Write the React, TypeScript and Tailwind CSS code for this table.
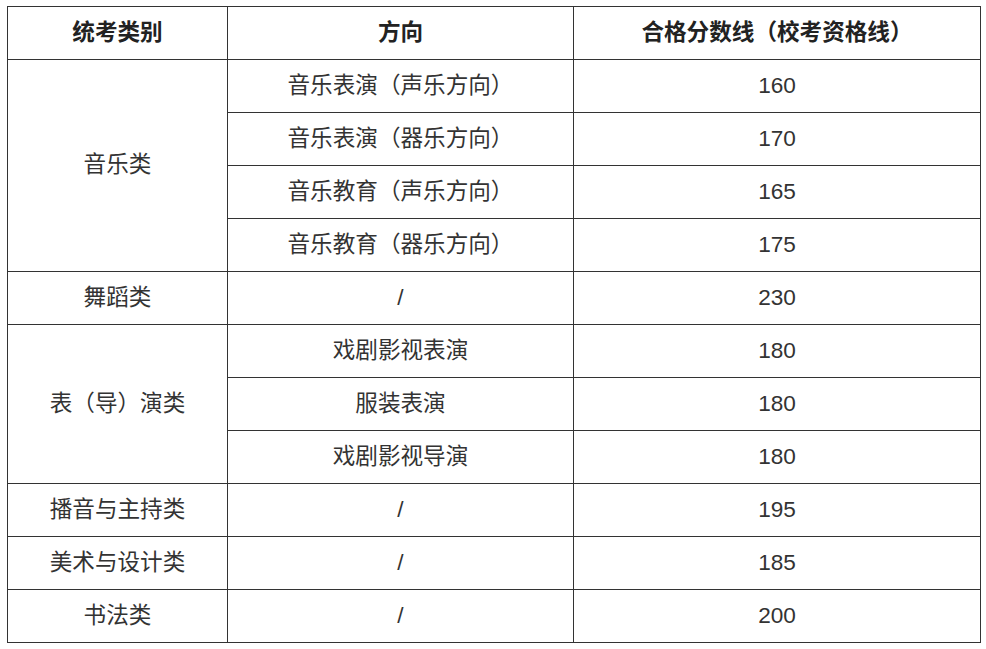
import React from 'react';

type Row = { dir: string; score: string };
type Group = { name: string; rows: Row[] };

const groups: Group[] = [
  {
    name: '音乐类',
    rows: [
      { dir: '音乐表演（声乐方向）', score: '160' },
      { dir: '音乐表演（器乐方向）', score: '170' },
      { dir: '音乐教育（声乐方向）', score: '165' },
      { dir: '音乐教育（器乐方向）', score: '175' },
    ],
  },
  { name: '舞蹈类', rows: [{ dir: '/', score: '230' }] },
  {
    name: '表（导）演类',
    rows: [
      { dir: '戏剧影视表演', score: '180' },
      { dir: '服装表演', score: '180' },
      { dir: '戏剧影视导演', score: '180' },
    ],
  },
  { name: '播音与主持类', rows: [{ dir: '/', score: '195' }] },
  { name: '美术与设计类', rows: [{ dir: '/', score: '185' }] },
  { name: '书法类', rows: [{ dir: '/', score: '200' }] },
];

const cell = 'border border-[#333] text-center align-middle h-[53px] p-0 pb-[1px]';

export default function App() {
  return (
    <div
      className="min-h-screen bg-white pl-[7px] pt-[6px] text-[#333] text-[22.6px]"
      style={{ fontFamily: '"Liberation Sans", "Noto Sans CJK SC", sans-serif' }}
    >
      <table className="border-collapse w-[973px] table-fixed">
        <colgroup>
          <col className="w-[220px]" />
          <col className="w-[346px]" />
          <col className="w-[407px]" />
        </colgroup>
        <thead>
          <tr>
            <th className={`${cell} font-bold text-[#222]`}>统考类别</th>
            <th className={`${cell} font-bold text-[#222]`}>方向</th>
            <th className={`${cell} font-bold text-[#222]`}>合格分数线（校考资格线）</th>
          </tr>
        </thead>
        <tbody>
          {groups.map((g) =>
            g.rows.map((r, i) => (
              <tr key={g.name + i}>
                {i === 0 && (
                  <td className={cell} rowSpan={g.rows.length}>
                    {g.name}
                  </td>
                )}
                <td className={cell}>{r.dir}</td>
                <td className={cell}>{r.score}</td>
              </tr>
            ))
          )}
        </tbody>
      </table>
    </div>
  );
}
